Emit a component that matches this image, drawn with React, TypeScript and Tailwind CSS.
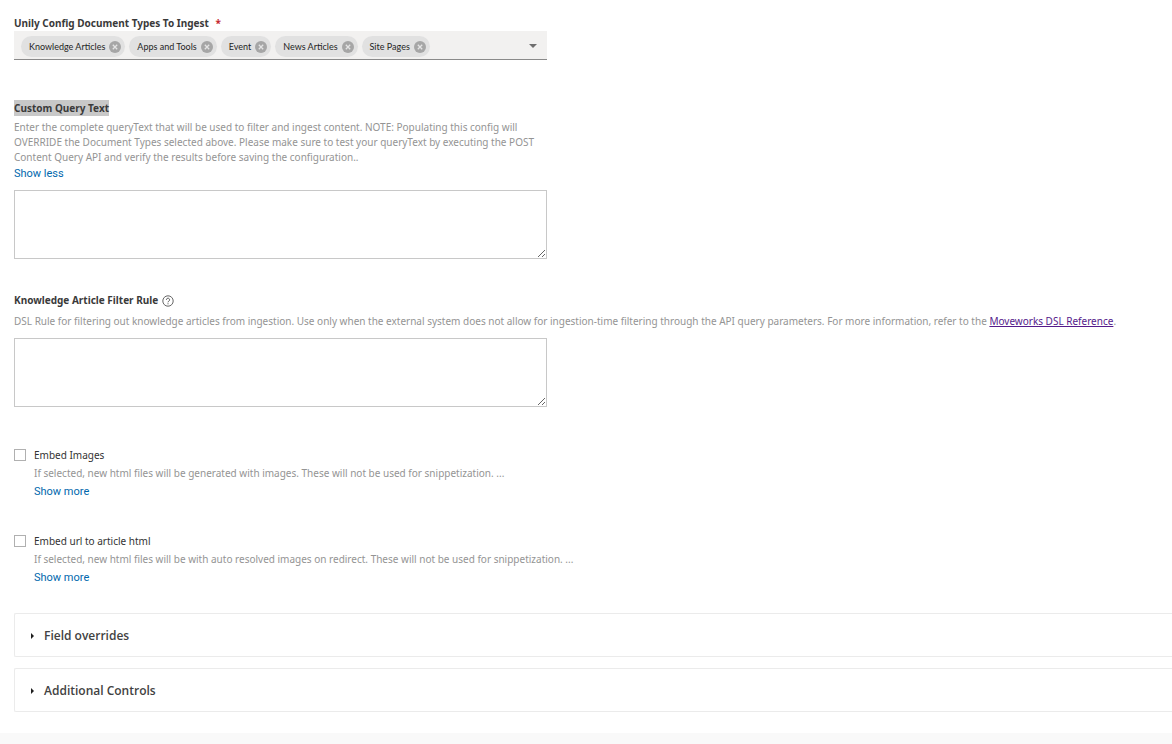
import { useState } from "react";
import type { ReactNode } from "react";

const DOCUMENT_TYPES = [
  "Knowledge Articles",
  "Apps and Tools",
  "Event",
  "News Articles",
  "Site Pages",
];

const labelClass = "text-[10px] leading-4 font-bold text-[#3a3a3a]";
const hintClass = "text-[10px] leading-[15px] text-[#949494]";
const areaClass =
  "block w-full max-w-[533px] h-[69px] resize border border-[#c8c8c8] bg-white px-2 py-1 text-[10px] outline-none focus:border-[#0078b4]";

function RemoveIcon() {
  return (
    <svg viewBox="0 0 12 12" className="size-3" aria-hidden="true">
      <circle cx="6" cy="6" r="6" fill="#a6a6a6" />
      <path d="M3.8 3.8l4.4 4.4M8.2 3.8l-4.4 4.4" stroke="#e4e4e4" strokeWidth="1.3" />
    </svg>
  );
}

function HelpIcon() {
  return (
    <svg viewBox="0 0 12 12" className="size-3" fill="none" stroke="#555555" aria-hidden="true">
      <circle cx="6" cy="6" r="5.2" strokeWidth="0.9" />
      <path d="M4.4 4.8a1.6 1.6 0 1 1 2.5 1.3c-.6.4-.9.6-.9 1.2" strokeWidth="1" />
      <path d="M6 8.3v1" strokeWidth="1" />
    </svg>
  );
}

function ShowToggle({ initial }: { initial: "more" | "less" }) {
  const [state, setState] = useState(initial);

  return (
    <button
      type="button"
      onClick={() => setState(state === "more" ? "less" : "more")}
      className="mt-px block cursor-pointer font-['Roboto',sans-serif] text-[11px] leading-4 text-[#0068ad]"
    >
      Show {state}
    </button>
  );
}

function DocumentTypes() {
  const [selected, setSelected] = useState(DOCUMENT_TYPES);

  return (
    <div>
      <label htmlFor="doc-types" className={`block ${labelClass}`}>
        Unily Config Document Types To Ingest <span className="ml-1 text-[#c4262e]">*</span>
      </label>
      <div className="flex w-full max-w-[533px] items-center border-b border-[#8a8a8a] bg-[#f2f1f0] pt-1 pb-px pl-[7px]">
        <ul className="flex flex-wrap gap-1">
          {selected.map((type) => (
            <li
              key={type}
              className="flex h-[21px] items-center gap-1 rounded-full bg-[#e1e1e1] pr-1 pl-2 font-['Lato',sans-serif] text-[9px] text-[#1f1f1f]"
            >
              {type}
              <button
                type="button"
                aria-label={`Remove ${type}`}
                className="cursor-pointer"
                onClick={() => setSelected(selected.filter((t) => t !== type))}
              >
                <RemoveIcon />
              </button>
            </li>
          ))}
        </ul>
        <div className="relative h-[23px] flex-1">
          <select
            id="doc-types"
            value=""
            onChange={(e) => setSelected([...selected, e.target.value])}
            className="block h-full w-full appearance-none bg-transparent text-[10px] outline-none"
          >
            <option value="" disabled hidden></option>
            {DOCUMENT_TYPES.filter((t) => !selected.includes(t)).map((t) => (
              <option key={t}>{t}</option>
            ))}
          </select>
          <svg
            viewBox="0 0 8 4"
            className="pointer-events-none absolute top-[9px] right-[10px] h-1 w-2"
            aria-hidden="true"
          >
            <path d="M0 0h8L4 4z" fill="#6e6e6e" />
          </svg>
        </div>
      </div>
    </div>
  );
}

function CheckField({ id, label, hint }: { id: string; label: string; hint: string }) {
  return (
    <div className="flex items-start gap-2">
      <input
        id={id}
        type="checkbox"
        className="mt-[2px] size-3 shrink-0 appearance-none border border-[#b0b0b0] bg-white checked:bg-[#0072b8]"
      />
      <div>
        <label htmlFor={id} className="block text-[10px] leading-4 text-[#333333]">
          {label}
        </label>
        <p className={`my-[3px] ${hintClass}`}>{hint}</p>
        <ShowToggle initial="more" />
      </div>
    </div>
  );
}

function Panel({ title, children }: { title: string; children?: ReactNode }) {
  const [open, setOpen] = useState(false);

  return (
    <section className="rounded-l-xs border border-r-0 border-[#ebebeb]">
      <h2>
        <button
          type="button"
          aria-expanded={open}
          onClick={() => setOpen(!open)}
          className="flex h-[42px] w-full cursor-pointer items-center gap-[10px] pt-px pl-4 text-left font-['Open_Sans','Noto_Sans',sans-serif] text-[12px] font-semibold text-[#424242]"
        >
          <svg viewBox="0 0 3 6" className="h-[6px] w-[3px]" aria-hidden="true">
            <path d="M0 0l3 3-3 3z" fill="#1f1f1f" />
          </svg>
          {title}
        </button>
      </h2>
      {open && children}
    </section>
  );
}

export default function App() {
  return (
    <div className="flex min-h-screen flex-col bg-[#f9f9f9] font-['Noto_Sans','Open_Sans',sans-serif]">
      <form className="bg-white pt-[15px] pb-[21px] pl-[14px]">
        <DocumentTypes />

        <div className="mt-10">
          <label htmlFor="query-text" className={`block w-fit bg-[#c8c8c8] ${labelClass}`}>
            Custom Query Text
          </label>
          <p className={`mt-1 max-w-[533px] ${hintClass}`}>
            Enter the complete queryText that will be used to filter and ingest content. NOTE:
            Populating this config will OVERRIDE the Document Types selected above. Please make
            sure to test your queryText by executing the POST Content Query API and verify the
            results before saving the configuration..
          </p>
          <ShowToggle initial="less" />
          <textarea id="query-text" className={`mt-2 ${areaClass}`} />
        </div>

        <div className="mt-[33px]">
          <div className="flex items-center gap-1">
            <label htmlFor="filter-rule" className={labelClass}>
              Knowledge Article Filter Rule
            </label>
            <button type="button" aria-label="Help" className="mt-[2px] cursor-pointer">
              <HelpIcon />
            </button>
          </div>
          <p className={`mt-[6px] ${hintClass}`}>
            DSL Rule for filtering out knowledge articles from ingestion. Use only when the external
            system does not allow for ingestion-time filtering through the API query parameters. For
            more information, refer to the{" "}
            <a href="#dsl-reference" className="text-[#551a8b] underline">
              Moveworks DSL Reference
            </a>
            .
          </p>
          <textarea id="filter-rule" className={`mt-[9px] ${areaClass}`} />
        </div>

        <div className="mt-10 flex flex-col gap-[33px]">
          <CheckField
            id="embed-images"
            label="Embed Images"
            hint="If selected, new html files will be generated with images. These will not be used for snippetization. ..."
          />
          <CheckField
            id="embed-url"
            label="Embed url to article html"
            hint="If selected, new html files will be with auto resolved images on redirect. These will not be used for snippetization. ..."
          />
        </div>

        <div className="mt-[27px] flex flex-col gap-[11px]">
          <Panel title="Field overrides" />
          <Panel title="Additional Controls" />
        </div>
      </form>
    </div>
  );
}
